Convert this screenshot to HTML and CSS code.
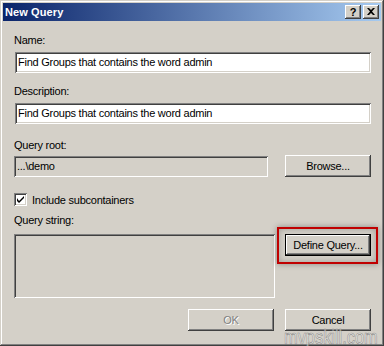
FILE: index.html
```html
<!DOCTYPE html>
<html lang="en">
<head>
  <meta charset="UTF-8" />
  <title>New Query</title>
  <link rel="stylesheet" href="styles.css">
</head>
<body>
  <div class="window">
    <div class="titlebar">
      <span class="title">New Query</span>
      <div class="caption-btns">
        <div class="cap-btn help">?</div>
        <div class="cap-btn">
          <svg width="8" height="7" viewBox="0 0 8 7">
            <path d="M0 0 L2 0 L4 2 L6 0 L8 0 L5 3.5 L8 7 L6 7 L4 5 L2 7 L0 7 L3 3.5 Z" fill="#000"/>
          </svg>
        </div>
      </div>
    </div>

    <div class="content">
      <div class="field-label name-label">Name:</div>
      <div class="textbox">Find Groups that contains the word admin</div>

      <div class="field-label desc-label">Description:</div>
      <div class="textbox">Find Groups that contains the word admin</div>

      <div class="field-label root-label">Query root:</div>
      <div class="row root-row">
        <div class="textbox readonly root-box">...\demo</div>
        <div class="btn">Browse...</div>
      </div>

      <div class="check-row">
        <span class="checkbox">
          <svg width="7" height="7" viewBox="0 0 7 7">
            <path d="M0 2 L0 5 L2 7 L7 2 L7 0 L2 5 Z" fill="#000"/>
          </svg>
        </span>
        <span>Include subcontainers</span>
      </div>

      <div class="field-label query-label">Query string:</div>
      <div class="row query-row">
        <div class="textbox readonly query-box"></div>
        <div class="btn default">Define Query...</div>
      </div>

      <div class="footer">
        <div class="btn disabled">OK</div>
        <div class="btn">Cancel</div>
      </div>
    </div>

    <div class="highlight"></div>
    <div class="watermark">mvpskill.com</div>
  </div>
</body>
</html>
```

FILE: styles.css
```css
:root {
  --face: #d4d0c8;
  --light: #ffffff;
  --shadow: #808080;
  --dark: #404040;
  --title-start: #0a246a;
  --title-end: #a6caf0;
}

* {
  box-sizing: border-box;
  margin: 0;
  padding: 0;
}

body {
  font-family: "Liberation Sans", Arial, sans-serif;
  font-size: 11px;
  letter-spacing: -0.25px;
  color: #000;
  background: var(--face);
}

.window {
  position: relative;
  width: 384px;
  height: 346px;
  padding: 3px;
  background: var(--face);
  box-shadow: inset -1px -1px var(--dark),
              inset 1px 1px var(--face),
              inset -2px -2px var(--shadow),
              inset 2px 2px var(--light);
  overflow: hidden;
}

.titlebar {
  height: 18px;
  display: flex;
  align-items: center;
  justify-content: space-between;
  padding: 0 2px 0 2px;
  background: linear-gradient(to right, var(--title-start), var(--title-end));
}

.title {
  color: #fff;
  font-weight: 700;
  font-size: 11px;
  letter-spacing: 0.1px;
}

.caption-btns {
  display: flex;
  gap: 2px;
}

.cap-btn {
  width: 16px;
  height: 14px;
  display: flex;
  align-items: center;
  justify-content: center;
  background: var(--face);
  box-shadow: inset -1px -1px var(--dark),
              inset 1px 1px var(--light),
              inset -2px -2px var(--shadow);
  font-weight: 700;
  font-size: 11px;
  line-height: 14px;
}

.cap-btn svg { margin-top: -1px; }

.content {
  display: flex;
  flex-direction: column;
  padding: 13px 10px 0 11px;
}

.field-label { line-height: 13px; }
.desc-label { margin-top: 12px; }
.root-label { margin-top: 15px; }
.query-label { margin-top: 8px; }

.textbox {
  height: 21px;
  margin: 5px 0 0 1px;
  padding: 0 3px;
  line-height: 21px;
  background: #fff;
  white-space: nowrap;
  box-shadow: inset 1px 1px var(--shadow),
              inset -1px -1px var(--light),
              inset 2px 2px var(--dark),
              inset -2px -2px var(--face);
}

.textbox.readonly { background: var(--face); }

.row {
  display: flex;
  align-items: flex-start;
  justify-content: space-between;
}

.root-row { margin-top: 3px; }
.root-box { width: 254px; margin: 1px 0 0 0; }

.query-row { margin-top: 7px; }
.query-box { width: 261px; height: 64px; margin: 0; }

.btn {
  width: 86px;
  height: 22px;
  display: flex;
  align-items: center;
  justify-content: center;
  background: var(--face);
  box-shadow: inset -1px -1px var(--dark),
              inset 1px 1px var(--light),
              inset -2px -2px var(--shadow);
}

.btn.default {
  box-shadow: inset 0 0 0 1px #000,
              inset -2px -2px var(--dark),
              inset 2px 2px var(--light),
              inset -3px -3px var(--shadow);
}

.btn.disabled {
  color: var(--shadow);
  text-shadow: 1px 1px var(--light);
}

.check-row {
  display: flex;
  align-items: center;
  gap: 5px;
  height: 13px;
  margin-top: 16px;
}

.checkbox {
  width: 13px;
  height: 13px;
  display: flex;
  align-items: center;
  justify-content: center;
  background: #fff;
  box-shadow: inset 1px 1px var(--shadow),
              inset -1px -1px var(--light),
              inset 2px 2px var(--dark),
              inset -2px -2px var(--face);
}

.footer {
  display: flex;
  justify-content: flex-end;
  gap: 11px;
  margin-top: 11px;
}

.highlight {
  position: absolute;
  left: 277px;
  top: 227px;
  width: 101px;
  height: 37px;
  border: 2px solid #c00000;
  box-shadow: 0 0 6px rgba(0, 0, 0, 0.35), inset 0 0 6px rgba(0, 0, 0, 0.25);
}

.watermark {
  position: absolute;
  left: 284px;
  top: 326px;
  font-size: 21px;
  line-height: 21px;
  letter-spacing: 0;
  color: rgba(255, 255, 255, 0.55);
  -webkit-text-stroke: 0.7px rgba(110, 110, 110, 0.7);
  transform: scaleX(0.78);
  transform-origin: left top;
  white-space: nowrap;
}
```
